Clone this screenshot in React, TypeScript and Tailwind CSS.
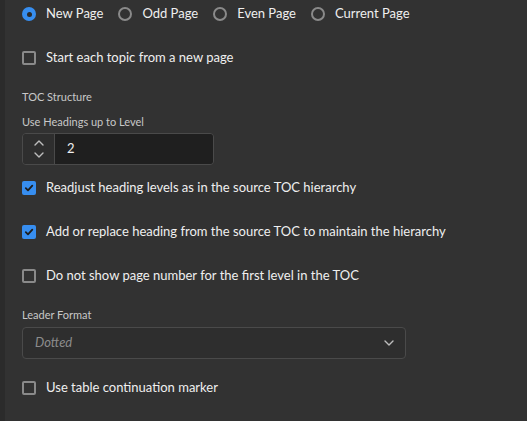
import React, { useState } from 'react';

const font = { fontFamily: 'Lato, "Open Sans", sans-serif' };

const Radio = ({ label, checked, onClick }: { label: string; checked: boolean; onClick: () => void }) => (
  <button onClick={onClick} className="flex items-center gap-[10px] text-[13px] text-[#efefef]">
    {checked ? (
      <span className="flex h-[14px] w-[14px] items-center justify-center rounded-full bg-[#378ef0]">
        <span className="h-[5px] w-[5px] rounded-full bg-[#2a2a2a]" />
      </span>
    ) : (
      <span className="h-[14px] w-[14px] rounded-full border-2 border-[#8a8a8a]" />
    )}
    <span>{label}</span>
  </button>
);

const Checkbox = ({ label, checked, onChange }: { label: string; checked: boolean; onChange: () => void }) => (
  <button onClick={onChange} className="flex h-[22px] items-center gap-[10px] text-[13px] text-[#efefef]">
    {checked ? (
      <span className="flex h-[14px] w-[14px] items-center justify-center rounded-[2px] bg-[#378ef0]">
        <svg width="10" height="10" viewBox="0 0 10 10" fill="none">
          <path d="M1.8 5.2 L4 7.4 L8.3 2.6" stroke="#1d1d1d" strokeWidth="1.8" strokeLinecap="round" strokeLinejoin="round" />
        </svg>
      </span>
    ) : (
      <span className="h-[14px] w-[14px] rounded-[2px] border-2 border-[#8a8a8a]" />
    )}
    <span>{label}</span>
  </button>
);

const Chevron = ({ up }: { up?: boolean }) => (
  <svg width="10" height="6" viewBox="0 0 10 6" fill="none" className={up ? 'rotate-180' : ''}>
    <path d="M1 1 L5 5 L9 1" stroke="#bdbdbd" strokeWidth="1.4" strokeLinecap="round" strokeLinejoin="round" />
  </svg>
);

export default function App() {
  const [start, setStart] = useState('New Page');
  const [checks, setChecks] = useState({ topic: false, readjust: true, replace: true, first: false, marker: false });
  const [level, setLevel] = useState(2);
  const toggle = (k: keyof typeof checks) => setChecks({ ...checks, [k]: !checks[k] });

  return (
    <div className="flex h-[421px] w-[527px] bg-[#323232]" style={font}>
      <div className="w-[5px] bg-[#2b2b2b]" />
      <div className="flex flex-1 flex-col pl-[17px] pt-[5px]">
        <div className="flex h-[18px] items-center gap-[15px]">
          {['New Page', 'Odd Page', 'Even Page', 'Current Page'].map((p) => (
            <Radio key={p} label={p} checked={start === p} onClick={() => setStart(p)} />
          ))}
        </div>

        <div className="mt-[24px]">
          <Checkbox label="Start each topic from a new page" checked={checks.topic} onChange={() => toggle('topic')} />
        </div>

        <div className="mt-[20px] text-[11px] text-[#c8c8c8]">TOC Structure</div>
        <div className="mt-[8px] text-[11px] text-[#c8c8c8]">Use Headings up to Level</div>

        <div className="mt-[3px] flex h-[32px] w-[192px] overflow-hidden rounded-[4px] border border-[#4a4a4a]">
          <div className="flex w-[32px] flex-col items-center justify-center gap-[6px] border-r border-[#4a4a4a] bg-[#2e2e2e]">
            <button onClick={() => setLevel(level + 1)}><Chevron up /></button>
            <button onClick={() => setLevel(Math.max(1, level - 1))}><Chevron /></button>
          </div>
          <div className="flex flex-1 items-center bg-[#1f1f1f] pl-[12px] text-[13px] text-[#efefef]">{level}</div>
        </div>

        <div className="mt-[12px] flex flex-col gap-[22px]">
          <Checkbox label="Readjust heading levels as in the source TOC hierarchy" checked={checks.readjust} onChange={() => toggle('readjust')} />
          <Checkbox label="Add or replace heading from the source TOC to maintain the hierarchy" checked={checks.replace} onChange={() => toggle('replace')} />
          <Checkbox label="Do not show page number for the first level in the TOC" checked={checks.first} onChange={() => toggle('first')} />
        </div>

        <div className="mt-[20px] text-[11px] text-[#c8c8c8]">Leader Format</div>
        <div className="mt-[3px] flex h-[32px] w-[384px] items-center justify-between rounded-[4px] border border-[#4a4a4a] bg-[#2e2e2e] pl-[12px] pr-[11px]">
          <span className="text-[13px] italic text-[#8c8c8c]">Dotted</span>
          <Chevron />
        </div>

        <div className="mt-[18px]">
          <Checkbox label="Use table continuation marker" checked={checks.marker} onChange={() => toggle('marker')} />
        </div>
      </div>
    </div>
  );
}
